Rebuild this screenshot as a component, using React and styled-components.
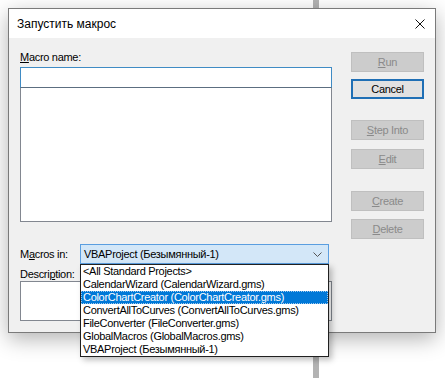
import React from 'react'
import styled, { createGlobalStyle } from 'styled-components'

const GlobalStyle = createGlobalStyle`
  html, body { margin: 0; }
  body {
    width: 445px;
    height: 378px;
    overflow: hidden;
    background: linear-gradient(to right, #fff 313px, #b3b3b3 313px, #b3b3b3 319px, #fff 319px);
    font-family: "Liberation Sans", Arial, sans-serif;
  }
`

const Page = styled.div`
  padding: 8px;
`

const Dialog = styled.div`
  width: 428px;
  height: 325px;
  box-sizing: border-box;
  border: 1px solid #7a7a7a;
  background: #f0f0f0;
  box-shadow: 0 6px 20px rgba(0, 0, 0, 0.3);
  display: flex;
  flex-direction: column;
`

const TitleBar = styled.div`
  height: 29px;
  background: #fff;
  display: flex;
  align-items: center;
  justify-content: space-between;
  padding: 0 10px 0 8px;
  font-size: 12px;
  color: #000;
`

const Body = styled.div`
  flex: 1;
  display: flex;
  gap: 19px;
  padding: 12px 11px 11px;
  font-size: 11px;
  letter-spacing: -0.3px;
  color: #000;
`

const LeftColumn = styled.div`
  width: 312px;
  display: flex;
  flex-direction: column;
`

const Label = styled.div`
  line-height: ${(p) => p.$lh || 14}px;
  margin-top: ${(p) => p.$mt || 0}px;
  white-space: nowrap;
`

const Key = styled.span`
  text-decoration: underline;
`

const NameInput = styled.div`
  margin-top: 3px;
  height: 21px;
  box-sizing: border-box;
  background: #fff;
  border: 1px solid #3f8bc4;
  border-bottom-color: #5c6e80;
`

const ListBox = styled.div`
  height: 134px;
  box-sizing: border-box;
  background: #fff;
  border: 1px solid #828790;
  border-top: none;
`

const ComboRow = styled.div`
  position: relative;
  margin-top: 22px;
  height: 20px;
  display: flex;
  align-items: center;
`

const ComboLabel = styled.div`
  width: 60px;
  white-space: nowrap;
`

const Combo = styled.div`
  width: 249px;
  height: 20px;
  box-sizing: border-box;
  border: 1px solid #5a9ee0;
  background: #d3e7f8;
  display: flex;
  align-items: center;
  justify-content: space-between;
  padding: 0 6px 0 3px;
`

const DropList = styled.div`
  position: absolute;
  left: 60px;
  top: 20px;
  width: 249px;
  box-sizing: border-box;
  border: 1px solid #202020;
  background: #fff;
  z-index: 2;
  box-shadow: 3px 3px 6px rgba(0, 0, 0, 0.25);
`

const DropItem = styled.div`
  height: 13px;
  line-height: 13px;
  box-sizing: border-box;
  padding-left: 2px;
  white-space: nowrap;
  overflow: hidden;
  background: ${(p) => (p.$selected ? '#0078d7' : 'transparent')};
  color: ${(p) => (p.$selected ? '#fff' : '#000')};
  outline: ${(p) => (p.$selected ? '1px dotted #9fc9ee' : 'none')};
  outline-offset: -1px;
`

const DescBox = styled.div`
  height: 40px;
  box-sizing: border-box;
  background: #fff;
  border: 1px solid #828790;
`

const ButtonColumn = styled.div`
  width: 73px;
  display: flex;
  flex-direction: column;
`

const Button = styled.div`
  margin-top: ${(p) => p.$mt}px;
  height: 20px;
  box-sizing: border-box;
  display: flex;
  align-items: center;
  justify-content: center;
  background: ${(p) => (p.$active ? '#e1e1e1' : '#cccccc')};
  border: ${(p) => (p.$active ? '2px solid #1f6fb5' : '1px solid #bfbfbf')};
  color: ${(p) => (p.$active ? '#000' : '#8a8a8a')};
`

const projects = [
  '<All Standard Projects>',
  'CalendarWizard (CalendarWizard.gms)',
  'ColorChartCreator (ColorChartCreator.gms)',
  'ConvertAllToCurves (ConvertAllToCurves.gms)',
  'FileConverter (FileConverter.gms)',
  'GlobalMacros (GlobalMacros.gms)',
  'VBAProject (Безымянный-1)',
]

export default function App() {
  return (
    <Page>
      <GlobalStyle />
      <Dialog>
        <TitleBar>
          <span>Запустить макрос</span>
          <svg width="10" height="10" viewBox="0 0 10 10">
            <path d="M0.5 0.5 L9.5 9.5 M9.5 0.5 L0.5 9.5" stroke="#111" strokeWidth="1" fill="none" />
          </svg>
        </TitleBar>
        <Body>
          <LeftColumn>
            <Label>
              <Key>M</Key>acro name:
            </Label>
            <NameInput />
            <ListBox />
            <ComboRow>
              <ComboLabel>
                M<Key>a</Key>cros in:
              </ComboLabel>
              <Combo>
                <span>VBAProject (Безымянный-1)</span>
                <svg width="9" height="5" viewBox="0 0 9 5">
                  <path d="M0.5 0.5 L4.5 4.5 L8.5 0.5" stroke="#555" strokeWidth="1" fill="none" />
                </svg>
              </Combo>
              <DropList>
                {projects.map((name, i) => (
                  <DropItem key={name} $selected={i === 2}>
                    {name}
                  </DropItem>
                ))}
              </DropList>
            </ComboRow>
            <Label $lh={13} $mt={4}>
              Descri<Key>p</Key>tion:
            </Label>
            <DescBox />
          </LeftColumn>
          <ButtonColumn>
            <Button $mt={2}>
              <span><Key>R</Key>un</span>
            </Button>
            <Button $mt={7} $active>
              Cancel
            </Button>
            <Button $mt={21}>
              <span><Key>S</Key>tep Into</span>
            </Button>
            <Button $mt={9}>
              <span><Key>E</Key>dit</span>
            </Button>
            <Button $mt={22}>
              <span><Key>C</Key>reate</span>
            </Button>
            <Button $mt={8}>
              <span><Key>D</Key>elete</span>
            </Button>
          </ButtonColumn>
        </Body>
      </Dialog>
    </Page>
  )
}
